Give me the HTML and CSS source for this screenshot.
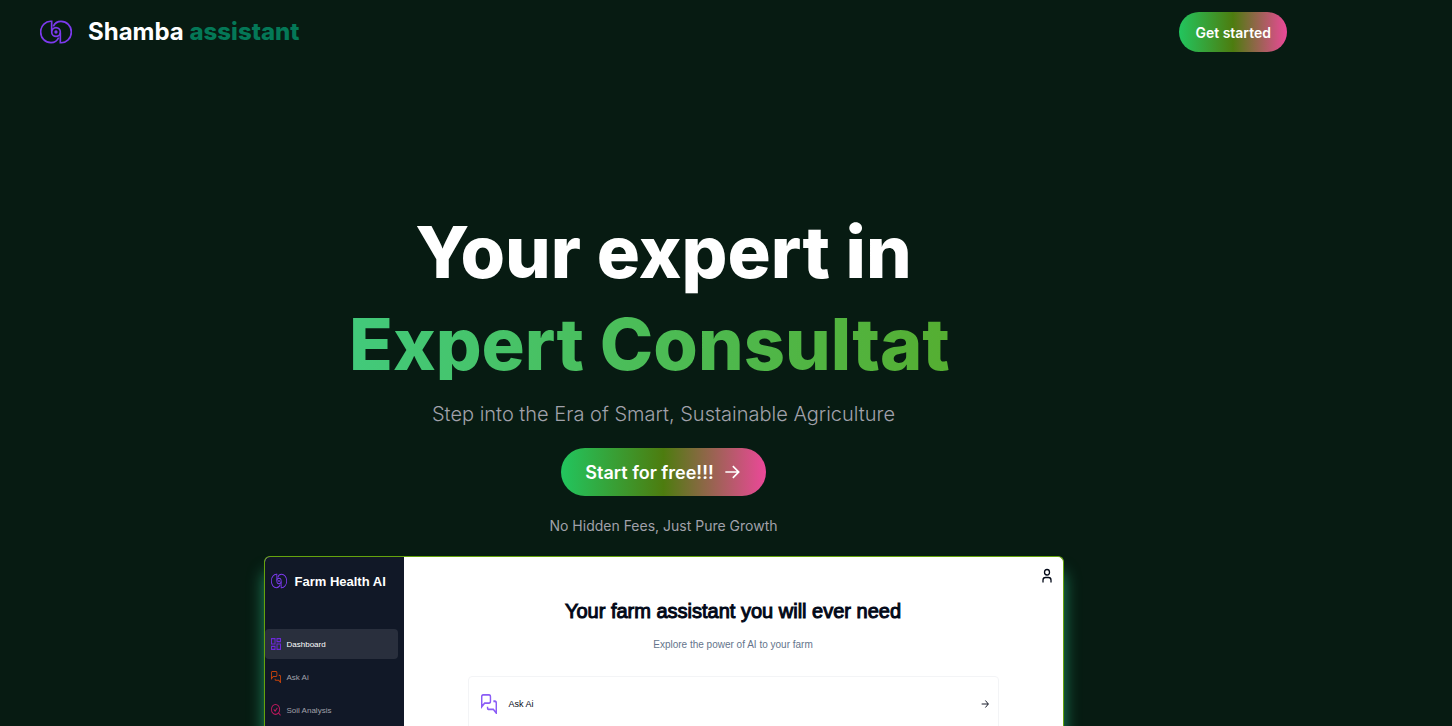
FILE: index.html
```html
<!DOCTYPE html>
<html lang="en">
<head>
<meta charset="utf-8">
<meta name="viewport" content="width=device-width, initial-scale=1">
<title>Shamba assistant</title>
<link rel="stylesheet" href="styles.css">
</head>
<body>
<svg class="sprite" aria-hidden="true">
  <symbol id="logo" viewBox="12 0 96 96" preserveAspectRatio="none">
    <g fill="none" stroke="currentColor" stroke-width="5">
      <path d="M47 46V16C29 14 14 29 14 48s14 32 31 32c11 0 19-6 23-15"/>
      <path d="M73 50v30c18 2 33-13 33-32S92 16 75 16c-11 0-19 6-23 15"/>
      <circle cx="60" cy="48" r="13"/>
    </g>
    <circle cx="60" cy="48" r="5" fill="currentColor"/>
  </symbol>
  <symbol id="arrow" viewBox="0 0 24 24" preserveAspectRatio="none">
    <path d="M4 12h16M13 5l7 7-7 7" fill="none" stroke="currentColor" stroke-width="2"/>
  </symbol>
  <symbol id="chat" viewBox="1 1 22 22" preserveAspectRatio="none">
    <path d="M14 9a2 2 0 0 1-2 2H6l-4 4V4c0-1.1.9-2 2-2h8a2 2 0 0 1 2 2v5ZM18 9h2a2 2 0 0 1 2 2v11l-4-4h-6a2 2 0 0 1-2-2v-1" fill="none" stroke="currentColor" stroke-width="2"/>
  </symbol>
</svg>
<div class="page">
  <header class="nav">
    <a class="brand" href="#"><svg class="brand-icon" aria-hidden="true"><use href="#logo"/></svg><span>Shamba <span class="brand-accent">assistant</span></span></a>
    <button class="pill pill-small" type="button">Get started</button>
  </header>
  <main class="hero">
    <h1 class="title"><span>Your expert in</span><span class="typed">Expert Consultat<span class="cursor">|</span></span></h1>
    <p class="lead">Step into the Era of Smart, Sustainable Agriculture</p>
    <button class="pill pill-large" type="button">Start for free!!!<svg class="pill-arrow" aria-hidden="true"><use href="#arrow"/></svg></button>
    <p class="note">No Hidden Fees, Just Pure Growth</p>
    <section class="preview">
      <aside class="side">
        <div class="side-brand"><svg class="side-logo" aria-hidden="true"><use href="#logo"/></svg><span>Farm Health AI</span></div>
        <nav class="side-nav">
          <a class="side-link active" href="#">
            <svg class="side-icon violet" viewBox="2 2 20 20" preserveAspectRatio="none" aria-hidden="true"><path d="M3 3h7v9H3zM14 3h7v5h-7zM14 12h7v9h-7zM3 16h7v5H3z" fill="none" stroke="currentColor" stroke-width="2"/></svg>Dashboard</a>
          <a class="side-link" href="#"><svg class="side-icon orange" aria-hidden="true"><use href="#chat"/></svg>Ask Ai</a>
          <a class="side-link" href="#">
            <svg class="side-icon pink" viewBox="1 1 22 22" preserveAspectRatio="none" aria-hidden="true"><path d="M20 11a9 9 0 1 1-18 0 9 9 0 0 1 18 0ZM22 22l-5-5M7 11l3 3 5-6" fill="none" stroke="currentColor" stroke-width="2"/></svg>Soil Analysis</a>
        </nav>
      </aside>
      <div class="board">
        <svg class="user" viewBox="0 0 12 16" role="img" aria-label="Account"><path d="M6 1.500c1.600 0 2.500 1.100 2.500 2.700S7.600 7 6 7 3.500 5.800 3.500 4.200 4.400 1.500 6 1.500ZM2 14.500V12c0-1.500 1-2.500 2.500-2.500h3C9 9.500 10 10.500 10 12v2.500" fill="none" stroke="currentColor" stroke-width="1.300"/></svg>
        <h2 class="board-title">Your farm assistant you will ever need</h2>
        <p class="board-text">Explore the power of AI to your farm</p>
        <a class="tool" href="#"><svg class="tool-icon" aria-hidden="true"><use href="#chat"/></svg><span>Ask Ai</span><svg class="tool-arrow" aria-hidden="true"><use href="#arrow"/></svg></a>
      </div>
    </section>
  </main>
</div>
</body>
</html>
```
FILE: styles.css
```css
* { box-sizing: border-box; }
body { margin: 0; background: #071b12; color: #fff; font-family: Inter, sans-serif; }
h1, h2, p { margin: 0; }
a { color: inherit; text-decoration: none; }
button { border: 0; font: inherit; color: inherit; cursor: pointer; }
svg { flex: none; }
.sprite { display: none; }

.page { height: 100vh; max-width: 1327px; overflow: hidden; display: flex; flex-direction: column; }
.nav { display: flex; align-items: center; justify-content: space-between; height: 64px; padding: 0 40px; flex: none; }
.brand { display: flex; align-items: center; gap: 16px; font-size: 24px; font-weight: 700; line-height: 32px; }
.brand-icon { width: 32px; height: 32px; color: #7c3aed; }
.brand-accent { color: #047857; font-weight: 800; }
.pill { display: flex; align-items: center; border-radius: 24px; background: linear-gradient(to right, #22c55e, #4d7c0f, #ec4899); }
.pill-small { height: 40px; padding: 0 16px; font-size: 14px; font-weight: 600; }
.pill-large { height: 48px; padding: 0 24px; margin-top: 20px; gap: 8px; font-size: 18px; font-weight: 600; }
.pill-arrow { width: 20px; height: 20px; }

.hero { flex: 1; display: flex; flex-direction: column; align-items: center; padding-top: 152px; min-height: 0; }
.title { display: flex; flex-direction: column; align-items: center; gap: 20px; font-size: 72px; font-weight: 800; line-height: 72px; white-space: nowrap; }
.typed { color: transparent; background: linear-gradient(to right, #42ca7b, #56ad2e); background-clip: text; -webkit-background-clip: text; }
.cursor { visibility: hidden; }
.lead { margin-top: 20px; font-size: 20px; font-weight: 300; line-height: 28px; color: #a1a1aa; }
.note { margin-top: 20px; font-size: 14px; line-height: 20px; color: #a1a1aa; }

.preview { flex: 1; display: flex; width: 100%; max-width: 800px; margin-top: 20px; border: 1px solid #65a30d; border-bottom: 0; border-radius: 6px 6px 0 0; background: #fff; box-shadow: 0 16px 16px 0 #1f8a60; overflow: hidden; font-family: "Liberation Sans", sans-serif; }
.side { width: 139px; flex: none; background: #111827; }
.side-brand { display: flex; align-items: center; gap: 8px; height: 48px; padding: 0 6px; font-size: 13px; font-weight: 700; white-space: nowrap; }
.side-logo { width: 16px; height: 20px; color: #7c3aed; }
.side-nav { display: flex; flex-direction: column; gap: 3px; padding: 24px 6px 0 0; }
.side-link { display: flex; align-items: center; gap: 6px; height: 30px; padding: 0 6px; border-radius: 4px; font-size: 8px; color: #a1a1aa; }
.active { background: #292f3d; color: #fff; }
.side-icon { width: 10px; height: 12px; }
.violet { color: #6d28d9; }
.orange { color: #c2410c; }
.pink { color: #be185d; }

.board { flex: 1; display: flex; flex-direction: column; align-items: center; color: #020817; }
.user { align-self: flex-end; width: 12px; height: 16px; margin: 11px 10px 0 0; }
.board-title { margin-top: 11px; font-size: 20px; font-weight: 400; line-height: 32px; -webkit-text-stroke: 1px #020817; }
.board-text { margin-top: 10px; font-size: 10px; line-height: 16px; color: #64748b; }
.tool { display: flex; flex: none; align-items: center; gap: 12px; align-self: stretch; height: 56px; margin: 23px 64px 0; padding: 0 8px 0 12px; border: 1px solid #f3f4f6; border-radius: 4px; font-size: 9px; }
.tool-icon { width: 16px; height: 20px; color: #8b5cf6; }
.tool-arrow { width: 10px; height: 12px; margin-left: auto; }
```
